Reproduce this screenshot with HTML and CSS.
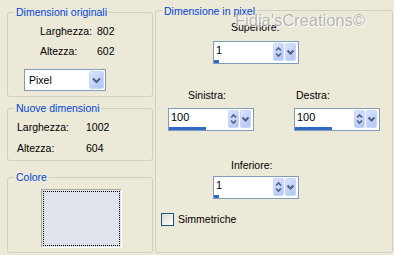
FILE: index.html
```html
<!DOCTYPE html>
<html lang="it">
<head>
    <meta charset="UTF-8">
    <title>Ridimensiona</title>
    <link rel="stylesheet" href="styles.css">
</head>
<body>
<div class="dialog">
    <div class="left-col">
        <fieldset class="box box-orig">
            <legend>Dimensioni originali</legend>
            <div class="dims">
                <span>Larghezza:</span><span>802</span>
                <span>Altezza:</span><span>602</span>
            </div>
            <div class="select">
                <span>Pixel</span>
                <span class="btn btn-select">
                    <svg width="15" height="18" viewBox="0 0 15 18"><path d="M4 7.5 L7.5 11 L11 7.5"/></svg>
                </span>
            </div>
        </fieldset>

        <fieldset class="box box-new">
            <legend>Nuove dimensioni</legend>
            <div class="dims">
                <span>Larghezza:</span><span>1002</span>
                <span>Altezza:</span><span>604</span>
            </div>
        </fieldset>

        <fieldset class="box box-color">
            <legend>Colore</legend>
            <div class="swatch"><div class="swatch-focus"></div></div>
        </fieldset>
    </div>

    <fieldset class="box box-pixel">
        <legend>Dimensione in pixel</legend>

        <div class="spin-block block-top">
            <div class="spin-label">Superiore:</div>
            <div class="spin">
                <div class="spin-field">
                    <span class="spin-val">1</span>
                    <span class="spin-bar" style="width:5px"></span>
                </div>
                <span class="btn btn-spin">
                    <svg width="11" height="18" viewBox="0 0 11 18"><path d="M3 7.5 L5.5 5 L8 7.5"/><path d="M3 10.5 L5.5 13 L8 10.5"/></svg>
                </span>
                <span class="btn btn-drop">
                    <svg width="11" height="18" viewBox="0 0 11 18"><path d="M2.5 7.5 L5.5 10.5 L8.5 7.5"/></svg>
                </span>
            </div>
        </div>

        <div class="spin-row">
            <div class="spin-block block-left">
                <div class="spin-label">Sinistra:</div>
                <div class="spin">
                    <div class="spin-field">
                        <span class="spin-val">100</span>
                        <span class="spin-bar" style="width:37px"></span>
                    </div>
                    <span class="btn btn-spin">
                        <svg width="11" height="18" viewBox="0 0 11 18"><path d="M3 7.5 L5.5 5 L8 7.5"/><path d="M3 10.5 L5.5 13 L8 10.5"/></svg>
                    </span>
                    <span class="btn btn-drop">
                        <svg width="11" height="18" viewBox="0 0 11 18"><path d="M2.5 7.5 L5.5 10.5 L8.5 7.5"/></svg>
                    </span>
                </div>
            </div>
            <div class="spin-block block-right">
                <div class="spin-label">Destra:</div>
                <div class="spin">
                    <div class="spin-field">
                        <span class="spin-val">100</span>
                        <span class="spin-bar" style="width:37px"></span>
                    </div>
                    <span class="btn btn-spin">
                        <svg width="11" height="18" viewBox="0 0 11 18"><path d="M3 7.5 L5.5 5 L8 7.5"/><path d="M3 10.5 L5.5 13 L8 10.5"/></svg>
                    </span>
                    <span class="btn btn-drop">
                        <svg width="11" height="18" viewBox="0 0 11 18"><path d="M2.5 7.5 L5.5 10.5 L8.5 7.5"/></svg>
                    </span>
                </div>
            </div>
        </div>

        <div class="spin-block block-bottom">
            <div class="spin-label">Inferiore:</div>
            <div class="spin">
                <div class="spin-field">
                    <span class="spin-val">1</span>
                    <span class="spin-bar" style="width:5px"></span>
                </div>
                <span class="btn btn-spin">
                    <svg width="11" height="18" viewBox="0 0 11 18"><path d="M3 7.5 L5.5 5 L8 7.5"/><path d="M3 10.5 L5.5 13 L8 10.5"/></svg>
                </span>
                <span class="btn btn-drop">
                    <svg width="11" height="18" viewBox="0 0 11 18"><path d="M2.5 7.5 L5.5 10.5 L8.5 7.5"/></svg>
                </span>
            </div>
        </div>

        <label class="check-row">
            <span class="check"></span>
            <span>Simmetriche</span>
        </label>
    </fieldset>

    <div class="watermark">Fidia'sCreations©</div>
</div>
</body>
</html>
```

FILE: styles.css
```css
body {
    margin: 0;
    background-color: #ECE9D8;
    font-family: "Liberation Sans", Arial, sans-serif;
    font-size: 10.5px;
    color: #000;
}
.dialog {
    position: relative;
    display: flex;
    gap: 2px;
    height: 253px;
    padding-left: 7px;
}
.left-col {
    display: flex;
    flex-direction: column;
    width: 146px;
}
fieldset.box {
    box-sizing: border-box;
    margin: 0;
    padding: 0;
    min-width: 0;
    border: 1px solid #D0D0BF;
    border-radius: 3px;
}
legend {
    margin-left: 6px;
    padding: 0 2px;
    color: #0046D5;
    line-height: 13px;
}
.box-orig {
    margin-top: 6px !important;
    padding: 2px 0 5px 0 !important;
}
.box-new {
    margin-top: 5px !important;
    padding: 2px 0 1px 0 !important;
}
.box-color {
    flex: 1;
    margin-top: 10px !important;
    padding-top: 5px !important;
}
.dims {
    display: grid;
}
.box-orig .dims {
    grid-template-columns: 57px auto;
    line-height: 20px;
    padding-left: 32px;
}
.box-new .dims {
    grid-template-columns: 69px auto;
    line-height: 21px;
    padding-left: 9px;
}
.select {
    box-sizing: border-box;
    display: flex;
    align-items: center;
    width: 82px;
    height: 22px;
    margin: 8px 0 0 16px;
    padding: 0 1px 0 4px;
    background: #fff;
    border: 1px solid #7F9DB9;
}
.btn {
    box-sizing: border-box;
    display: block;
    height: 18px;
    background: linear-gradient(135deg, #DCE6FD 0%, #C4D4FA 50%, #B2C6F4 100%);
    border: 1px solid #C8D6FA;
    border-radius: 2px;
}
.btn svg {
    display: block;
    margin: -1px;
    fill: none;
    stroke: #4D6185;
    stroke-width: 2;
}
.btn-select {
    width: 15px;
    margin-left: auto;
}
.btn-spin svg {
    stroke-width: 1.6;
}
.btn-spin, .btn-drop {
    width: 11px;
}
.btn-drop {
    margin-left: 1px;
}
.swatch {
    box-sizing: border-box;
    width: 81px;
    height: 59px;
    margin-left: 33px;
    padding: 1px;
    background: #DFE3EC;
    border: 1px solid;
    border-color: #ACA899 #fff #fff #ACA899;
}
.swatch-focus {
    box-sizing: border-box;
    height: 100%;
    border: 1px dotted #000;
}

.box-pixel {
    width: 238px;
    margin-top: 2px !important;
}
.box-pixel legend {
    padding-top: 3px;
}
.spin-label {
    line-height: 14px;
}
.spin {
    box-sizing: border-box;
    display: flex;
    align-items: flex-start;
    width: 86px;
    height: 23px;
    padding: 1px 2px 0 0;
    background: #fff;
    border: 1px solid #7F9DB9;
}
.spin-field {
    flex: 1;
    display: flex;
    flex-direction: column;
    justify-content: space-between;
    align-items: flex-start;
    height: 20px;
}
.spin-val {
    padding-left: 2px;
    line-height: 14px;
    font-size: 11px;
}
.spin-bar {
    display: block;
    height: 3px;
    background: #316AC5;
}
.block-top {
    margin: 2px 0 0 57px;
}
.block-top .spin-label, .block-bottom .spin-label {
    margin-left: 18px;
}
.spin-label + .spin {
    margin-top: 7px;
}
.spin-row {
    display: flex;
    gap: 40px;
    margin-top: 24px;
}
.spin-row .spin-label + .spin {
    margin-top: 6px;
}
.block-left {
    margin-left: 12px;
}
.block-left .spin-label {
    margin-left: 20px;
}
.block-right .spin-label {
    margin-left: 2px;
}
.block-bottom {
    margin: 27px 0 0 57px;
}
.block-bottom .spin-label + .spin {
    margin-top: 4px;
}
.check-row {
    display: flex;
    align-items: center;
    gap: 4px;
    margin: 14px 0 0 5px;
    line-height: 13px;
}
.check {
    box-sizing: border-box;
    width: 13px;
    height: 13px;
    border: 1px solid #1C5180;
    background: linear-gradient(135deg, #DCDCD7 0%, #F0F0EA 60%, #fff 100%);
}
.watermark {
    position: absolute;
    left: 235px;
    top: 11px;
    font-size: 16.5px;
    color: #A4A4A4;
    opacity: 0.75;
    text-shadow: 1px 1px 0 #fff, -1px 0 0 #fff;
    pointer-events: none;
}
```
